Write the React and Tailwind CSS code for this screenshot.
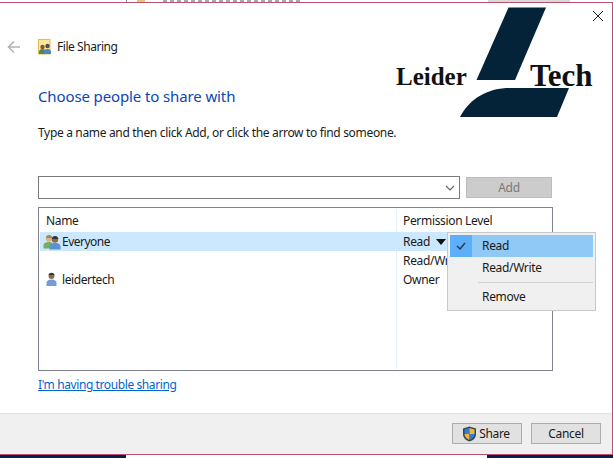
export default function App() {
  const users = (
    <svg width="18" height="16" viewBox="0 0 18 16" className="shrink-0">
      <circle cx="6" cy="4.500" r="3.200" fill="#d8b48a" />
      <path d="M2.800 4c0.500-4 6-4 6.500 0z" fill="#a08850" />
      <path d="M0.500 14.500v-3c0-2.500 2.500-3.500 5.500-3.500s4 1 4 3.500v3z" fill="#78ae5c" />
      <circle cx="12" cy="5.500" r="3.200" fill="#8c6a4e" />
      <path d="M8.800 5c0.500-4 6-4 6.500 0z" fill="#33343a" />
      <path d="M6.500 15.500v-3c0-2.500 2.500-3.500 5.500-3.500s5.500 1 5.500 3.500v3z" fill="#5a93cf" />
    </svg>
  );
  return (
    <div className="relative flex h-[458px] w-[613px] flex-col overflow-hidden bg-white text-[12px] tracking-[-0.33px] text-[#1a1a1a] [font-family:'Noto_Sans',sans-serif]">
      <div className="flex h-[2px] shrink-0 bg-white">
        <div className="ml-[126px] h-full w-px bg-[#888]" />
        <div className="ml-[10px] h-full w-[8px] bg-[#ecc66a]" />
        <div className="ml-[18px] h-full w-[140px] bg-[repeating-linear-gradient(90deg,#a8a8a8_0px,#a8a8a8_4px,#ffffff_4px,#ffffff_7px)]" />
        <div className="ml-auto mr-[43px] h-full w-[82px] bg-[#d8d8d8]" />
      </div>
      <div className="flex h-[453px] shrink-0 flex-col border-y border-r border-[#b8506f] bg-white">
        <div className="flex h-[410px] shrink-0 flex-col pl-[38px]">
          <div className="mt-[36px] flex h-[16px] items-center">
            <svg width="14" height="14" viewBox="0 0 14 14" className="-ml-[31px] mr-[17px] shrink-0" fill="none" stroke="#b4b4b4" strokeWidth="1.6">
              <path d="M13 7H1.5M7 1.5 1.5 7 7 12.500" />
            </svg>
            <svg width="14" height="16" viewBox="0 0 14 16" className="mr-[5px] shrink-0">
              <rect x="0.5" y="0.5" width="11.500" height="14.500" fill="#ffe796" stroke="#e6bd52" />
              <circle cx="4.500" cy="8" r="2.200" fill="#7a5a3c" />
              <path d="M1 15v-2c0-2 1.500-3 3.500-3S8 11 8 13v2z" fill="#4d8a52" />
              <circle cx="9.500" cy="7" r="2.200" fill="#4b4f57" />
              <path d="M6 15v-2c0-2 1.500-3 3.500-3S13 11 13 13v2z" fill="#4b87c5" />
            </svg>
            <span className="tracking-[-0.45px]">File Sharing</span>
          </div>
          <h1 className="mt-[31px] text-[15px] leading-[20px] font-normal tracking-[-0.12px] text-[#0b46b8]">Choose people to share with</h1>
          <p className="mt-[19px] leading-[16px]">Type a name and then click Add, or click the arrow to find someone.</p>
          <div className="mt-[35px] flex h-[23px] w-[514px] items-start justify-between">
            <div className="flex h-[23px] w-[422px] items-center justify-end border border-[#7a7a7a] bg-white pr-[4px]">
              <svg width="10" height="6" viewBox="0 0 10 6" fill="none" stroke="#606060" strokeWidth="1.100"><path d="M1 1l4 4 4-4" /></svg>
            </div>
            <div className="mt-px flex h-[21px] w-[86px] items-center justify-center border border-[#bcbcbc] bg-[#cccccc] text-[#7a7a7a]">Add</div>
          </div>
          <div className="mt-[8px] h-[164px] w-[515px] border border-[#82828c] bg-white p-px">
            <div className="flex h-[23px] items-center">
              <div className="w-[356px] pt-px pl-[6px]">Name</div>
              <div className="flex h-full items-center border-l border-[#e5eff8] pt-px pl-[6px]">Permission Level</div>
            </div>
            <div className="flex h-[19px] items-center bg-[#cce8ff]">
              <div className="flex w-[356px] items-center gap-[1px] pl-[3px]">{users}<span className="tracking-[-0.5px]">Everyone</span></div>
              <div className="flex items-center gap-[6px] pl-[7px]">
                <span>Read</span>
                <svg width="10" height="6" viewBox="0 0 10 6"><path d="M0 0h10L5 6z" fill="#111" /></svg>
              </div>
            </div>
            <div className="flex h-[19px] items-center">
              <div className="w-[356px]" />
              <div className="h-full border-l border-[#e5eff8] pl-[6px] leading-[19px]">Read/Write</div>
            </div>
            <div className="flex h-[19px] items-center">
              <div className="flex w-[356px] items-center gap-[5px] pl-[6px]">
                <svg width="11" height="15" viewBox="0 0 11 15" className="shrink-0">
                  <circle cx="5.500" cy="4" r="3" fill="#8a6a50" />
                  <path d="M2.500 3c1-3 5-3 6 0z" fill="#33343a" />
                  <path d="M0.500 14v-3c0-2 2-3.500 5-3.500s5 1.500 5 3.500v3z" fill="#6f9fd4" />
                </svg>
                <span className="tracking-[-0.4px]">leidertech</span>
              </div>
              <div className="h-full border-l border-[#e5eff8] pl-[6px] leading-[19px]">Owner</div>
            </div>
            <div className="ml-[356px] h-[80px] border-l border-[#e5eff8]" />
          </div>
          <a className="mt-[6px] w-fit leading-[16px] tracking-[-0.4px] text-[#0066cc] underline">I'm having trouble sharing</a>
        </div>
        <div className="flex flex-1 items-start justify-end gap-[9px] border-t border-[#dfdfdf] bg-[#f0f0f0] pt-[9px] pr-[11px]">
          <div className="flex h-[21px] w-[70px] items-center justify-center gap-[2px] border border-[#adadad] bg-[#e1e1e1] pr-[2px]">
            <svg width="15" height="16" viewBox="0 0 15 16" className="shrink-0">
              <path d="M7.500 0.500 14 2.500V8c0 4-3 6.500-6.500 7.500C4 14.500 1 12 1 8V2.500z" fill="#33475b" />
              <path d="M7.500 2 7.500 8H2.500V3.500z" fill="#2f7fd6" />
              <path d="M7.500 2 12.500 3.500V8H7.500z" fill="#f6b92b" />
              <path d="M2.500 8H7.500V14C5 13 2.500 11 2.500 8z" fill="#f6b92b" />
              <path d="M7.500 8H12.500C12.500 11 10 13 7.500 14z" fill="#2f7fd6" />
            </svg>
            <span>Share</span>
          </div>
          <div className="flex h-[21px] w-[70px] items-center justify-center border border-[#adadad] bg-[#e1e1e1]">Cancel</div>
        </div>
      </div>
      <div className="flex h-[3px] shrink-0 justify-between">
        <div className="h-full w-[126px] bg-[#0b1e4a]" />
        <div className="h-full w-[126px] bg-[#0b1e4a]" />
      </div>

      <svg width="12" height="12" viewBox="0 0 12 12" className="absolute top-[10px] left-[592px]" fill="none" stroke="#222" strokeWidth="1"><path d="M1 1l10 10M11 1 1 11" /></svg>

      <svg width="120" height="112" viewBox="0 0 120 112" className="absolute top-[6px] left-[458px]">
        <path d="M50.500 1.500H88L57 74H18.500z" fill="#042338" />
        <path d="M2 111C12 92 30 82 52 82H111L99 111z" fill="#042338" />
      </svg>
      <span className="absolute top-[61px] left-[396px] text-[25px] leading-[32px] font-bold tracking-normal text-[#111] [font-family:'Liberation_Serif',serif]">Leider</span>
      <span className="absolute top-[57px] left-[530px] text-[31px] leading-[38px] font-bold tracking-normal text-[#111] [font-family:'Liberation_Serif',serif]">Tech</span>

      <div className="absolute top-[232px] left-[447px] h-[79px] w-[149px] border border-[#c8c8c8] bg-[#f0f0f0] p-[2px]">
        <div className="flex h-[22px] items-center bg-[#90c8f6]">
          <div className="flex h-full w-[22px] items-center justify-center bg-[#5cb0fb]">
            <svg width="10" height="8" viewBox="0 0 10 8" fill="none" stroke="#334" strokeWidth="1.400"><path d="M1 4l3 3 5-6" /></svg>
          </div>
          <span className="ml-[10px]">Read</span>
        </div>
        <div className="flex h-[22px] items-center pl-[32px]">Read/Write</div>
        <div className="mt-[3px] ml-[28px] h-px bg-[#d0d0d0]" />
        <div className="flex h-[28px] items-center pl-[32px]">Remove</div>
      </div>
    </div>
  );
}
